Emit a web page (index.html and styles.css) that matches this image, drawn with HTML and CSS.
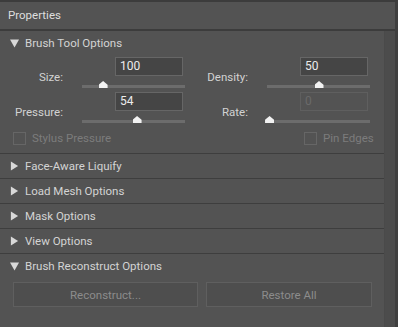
FILE: index.html
```html
<!DOCTYPE html>
<html lang="en">
<head>
    <meta charset="UTF-8" />
    <title>Properties</title>
    <link rel="stylesheet" href="styles.css">
</head>
<body>

<div class="panel">
    <div class="title">Properties</div>
    <div class="body">
        <div class="content">

            <div class="section open">
                <div class="section-head">
                    <svg class="arrow" width="10" height="9" viewBox="0 0 10 9"><polygon points="0,0 10,0 5,9" /></svg>
                    Brush Tool Options
                </div>
                <div class="fields">
                    <div class="field">
                        <label>Size:</label>
                        <div class="input">100</div>
                        <div class="slider"><span class="thumb" style="left: 20%"></span></div>
                    </div>
                    <div class="field">
                        <label>Density:</label>
                        <div class="input">50</div>
                        <div class="slider"><span class="thumb" style="left: 50%"></span></div>
                    </div>
                    <div class="field">
                        <label>Pressure:</label>
                        <div class="input">54</div>
                        <div class="slider"><span class="thumb" style="left: 53%"></span></div>
                    </div>
                    <div class="field">
                        <label>Rate:</label>
                        <div class="input disabled">0</div>
                        <div class="slider"><span class="thumb" style="left: 2%"></span></div>
                    </div>
                </div>
                <div class="checks">
                    <div class="check"><span class="box"></span>Stylus Pressure</div>
                    <div class="check right"><span class="box"></span>Pin Edges</div>
                </div>
            </div>

            <div class="section">
                <div class="section-head">
                    <svg class="arrow" width="10" height="10" viewBox="0 0 10 10"><polygon points="1,0 9,5 1,10" /></svg>
                    Face-Aware Liquify
                </div>
            </div>
            <div class="section">
                <div class="section-head">
                    <svg class="arrow" width="10" height="10" viewBox="0 0 10 10"><polygon points="1,0 9,5 1,10" /></svg>
                    Load Mesh Options
                </div>
            </div>
            <div class="section">
                <div class="section-head">
                    <svg class="arrow" width="10" height="10" viewBox="0 0 10 10"><polygon points="1,0 9,5 1,10" /></svg>
                    Mask Options
                </div>
            </div>
            <div class="section">
                <div class="section-head">
                    <svg class="arrow" width="10" height="10" viewBox="0 0 10 10"><polygon points="1,0 9,5 1,10" /></svg>
                    View Options
                </div>
            </div>

            <div class="section last">
                <div class="section-head">
                    <svg class="arrow" width="10" height="9" viewBox="0 0 10 9"><polygon points="0,0 10,0 5,9" /></svg>
                    Brush Reconstruct Options
                </div>
                <div class="buttons">
                    <button class="btn wide">Reconstruct...</button>
                    <button class="btn">Restore All</button>
                </div>
            </div>

        </div>
        <div class="scroll"></div>
    </div>
</div>

</body>
</html>
```

FILE: styles.css
```css
body {
    margin: 0;
    background: #535353;
    font-family: Roboto, "Noto Sans", sans-serif;
    font-size: 11.5px;
    color: #d4d4d4;
}
.panel {
    width: 398px;
    height: 327px;
    box-sizing: border-box;
    border-top: 2px solid #3c3c3c;
    border-right: 3px solid #3f3f3f;
    background: #535353;
    overflow: hidden;
}
.title {
    height: 27px;
    line-height: 27px;
    padding-left: 8px;
    border-bottom: 2px solid #3c3c3c;
    color: #dedede;
}
.body {
    display: flex;
    height: 296px;
}
.content {
    width: 385px;
}
.scroll {
    width: 10px;
    background: #4c4c4c;
    border-left: 1px solid #4a4a4a;
}

/* Sections */
.section {
    border-bottom: 1px solid #3e3e3e;
}
.section.last {
    border-bottom: none;
}
.section-head {
    height: 24px;
    display: flex;
    align-items: center;
    gap: 6px;
    padding-left: 10px;
}
.arrow {
    fill: #d8d8d8;
    width: 9px;
}

/* Fields */
.fields {
    display: grid;
    grid-template-columns: 185px 185px;
    padding-top: 2px;
}
.field {
    display: grid;
    grid-template-columns: 82px 33px 68px 2px;
    grid-template-rows: 19px 16px;
}
.field label {
    grid-row: 1 / 3;
    grid-column: 1;
    align-self: center;
    text-align: right;
    padding-right: 19px;
    padding-top: 4px;
    color: #d2d2d2;
}
.input {
    grid-row: 1;
    grid-column: 3;
    box-sizing: border-box;
    height: 19px;
    line-height: 17px;
    padding-left: 4px;
    background: #454545;
    border: 1px solid #666;
    color: #ececec;
    font-size: 12px;
}
.input.disabled {
    background: #535353;
    border-color: #5f5f5f;
    color: #6a6a6a;
}
.slider {
    grid-row: 2;
    grid-column: 2 / 5;
    position: relative;
    height: 3px;
    margin-top: 9px;
    background: #6c6c6c;
}
.thumb {
    position: absolute;
    top: -4px;
    width: 9px;
    height: 7px;
    margin-left: -4px;
    background: #f2f2f2;
    clip-path: polygon(50% 0, 100% 55%, 100% 100%, 0 100%, 0 55%);
}

/* Checkboxes */
.checks {
    display: grid;
    grid-template-columns: 185px 185px;
    padding: 4px 0 8px;
}
.check {
    display: flex;
    align-items: center;
    gap: 6px;
    padding-left: 13px;
    height: 14px;
    white-space: nowrap;
    color: #7c7c7c;
}
.check.right {
    padding-left: 119px;
}
.box {
    flex: none;
    width: 11px;
    height: 11px;
    border: 1px solid #666;
}

/* Buttons */
.buttons {
    display: flex;
    gap: 8px;
    padding: 4px 0 0 13px;
}
.btn {
    height: 25px;
    width: 166px;
    background: #4e4e4e;
    border: 1px solid #5f5f5f;
    color: #8c8c8c;
    font-family: inherit;
    font-size: 11.5px;
    padding: 0;
}
.btn.wide {
    width: 185px;
}
```
